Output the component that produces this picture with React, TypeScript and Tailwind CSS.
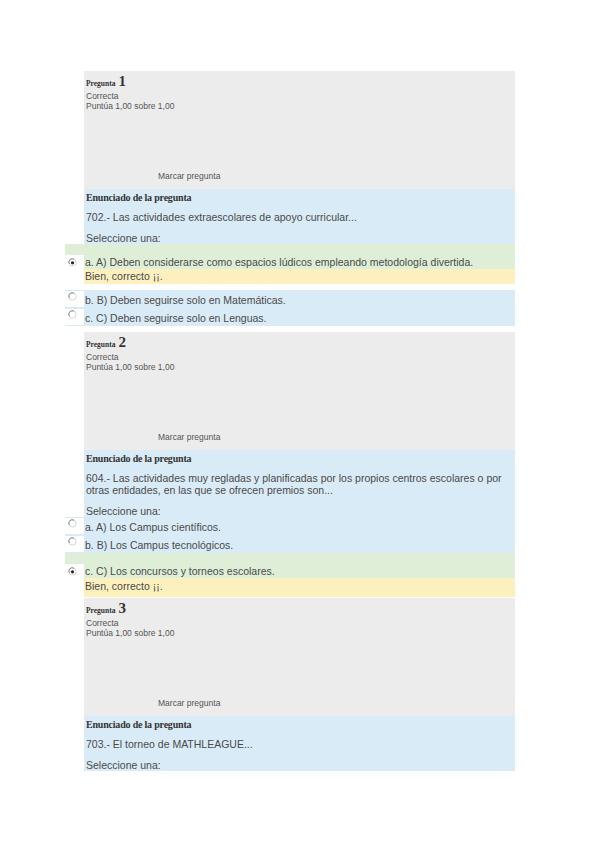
import React from 'react'

const sans = { fontFamily: '"Liberation Sans", Arial, sans-serif' }
const serif = { fontFamily: '"Liberation Serif", "Times New Roman", serif' }

const Radio = ({ checked }: { checked?: boolean }) => (
  <svg width="9" height="9" viewBox="0 0 9 9" className="block">
    <circle cx="4.5" cy="4.5" r="3.6" fill="#fff" stroke="#d0d0d0" strokeWidth="0.9" />
    <path d="M1.4 6 A3.4 3.4 0 0 1 6 1.2" fill="none" stroke="#8a8a8a" strokeWidth="1" />
    {checked && <circle cx="4.5" cy="4.8" r="1.6" fill="#222" />}
  </svg>
)

type Answer = { label: string; correct?: boolean }
type Question = {
  num: number
  text: string[]
  answers: Answer[]
}

const InfoBox = ({ num }: { num: number }) => (
  <div className="ml-[19px] h-[118px] bg-[#ececec] flex flex-col pl-[2px] pt-[3px] text-[#555]" style={sans}>
    <div className="flex items-baseline gap-[3px] text-[#333] leading-[14px]" style={serif}>
      <span className="text-[7.5px] font-bold">Pregunta</span>
      <span className="text-[15px] font-bold">{num}</span>
    </div>
    <div className="text-[8.5px] leading-[10px]">Correcta</div>
    <div className="text-[8.5px] leading-[10px]">Puntúa 1,00 sobre 1,00</div>
    <div className="mt-auto mb-[8px] ml-[72px] text-[8.5px] leading-[10px]">Marcar pregunta</div>
  </div>
)

const AnswerRow = ({ a, tall }: { a: Answer; tall?: boolean }) =>
  a.correct ? (
    <div>
      <div className="h-[25px] bg-[#dfefd7] flex items-end">
        <div className="w-[19px] h-[16px] bg-white mb-[-2px] pl-[3px] pt-[3px] self-end">
          <Radio checked />
        </div>
        <div className="text-[10.5px] leading-[14px] text-[#4a4a4a] pl-[1px]" style={sans}>{a.label}</div>
      </div>
      <div
        className={`ml-[19px] bg-[#fdf0bf] text-[10.5px] leading-[15px] text-[#4a4a4a] pl-[1px] ${tall ? 'h-[19px] pt-[1px]' : 'h-[15px]'}`}
        style={sans}
      >
        Bien, correcto ¡¡.
      </div>
    </div>
  ) : (
    <div className="h-[18px] bg-[#d9ebf6] flex items-stretch">
      <div className="w-[19px] my-[1px] bg-white pl-[3px] pt-[1px]">
        <Radio />
      </div>
      <div className="flex items-end pb-[1px] text-[10.5px] leading-[13px] text-[#4a4a4a] pl-[1px]" style={sans}>{a.label}</div>
    </div>
  )

const Statement = ({ text }: { text: string[] }) => (
  <div className="ml-[19px] bg-[#d9ebf6] pl-[2px] pt-[3px]">
    <div className="text-[10px] font-bold text-[#333] leading-[12px] tracking-[-0.2px]" style={serif}>
      Enunciado de la pregunta
    </div>
    <div className="mt-[7px] text-[10.5px] leading-[12px] text-[#4a4a4a]" style={sans}>
      {text.map((t, i) => (
        <div key={i}>{t}</div>
      ))}
    </div>
    <div className="mt-[9px] text-[10.5px] leading-[12px] text-[#4a4a4a]" style={sans}>
      Seleccione una:
    </div>
  </div>
)

const QuestionBlock = ({
  q,
  gapAfterCorrect,
  tallFeedback,
  gapBottom,
}: {
  q: Question
  gapAfterCorrect?: boolean
  tallFeedback?: boolean
  gapBottom?: string
}) => (
  <div className={gapBottom}>
    <InfoBox num={q.num} />
    <Statement text={q.text} />
    {q.answers.map((a, i) => (
      <div key={i} className={a.correct && gapAfterCorrect ? 'mb-[6px]' : ''}>
        <AnswerRow a={a} tall={tallFeedback} />
      </div>
    ))}
  </div>
)

const questions: Question[] = [
  {
    num: 1,
    text: ['702.- Las actividades extraescolares de apoyo curricular...'],
    answers: [
      { label: 'a. A) Deben considerarse como espacios lúdicos empleando metodología divertida.', correct: true },
      { label: 'b. B) Deben seguirse solo en Matemáticas.' },
      { label: 'c. C) Deben seguirse solo en Lenguas.' },
    ],
  },
  {
    num: 2,
    text: [
      '604.- Las actividades muy regladas y planificadas por los propios centros escolares o por',
      'otras entidades, en las que se ofrecen premios son...',
    ],
    answers: [
      { label: 'a. A) Los Campus científicos.' },
      { label: 'b. B) Los Campus tecnológicos.' },
      { label: 'c. C) Los concursos y torneos escolares.', correct: true },
    ],
  },
]

export default function App() {
  return (
    <div className="w-[599px] min-h-[848px] bg-white">
      <div className="ml-[65px] w-[450px] pt-[71px]">
        <QuestionBlock q={questions[0]} gapAfterCorrect gapBottom="mb-[6px]" />
        <QuestionBlock q={questions[1]} tallFeedback gapBottom="mb-[1px]" />
        <InfoBox num={3} />
        <div className="h-[55px] bg-[#d9ebf6] ml-[19px]">
          <div className="-ml-[19px]">
            <Statement text={['703.- El torneo de MATHLEAGUE...']} />
          </div>
        </div>
      </div>
    </div>
  )
}
